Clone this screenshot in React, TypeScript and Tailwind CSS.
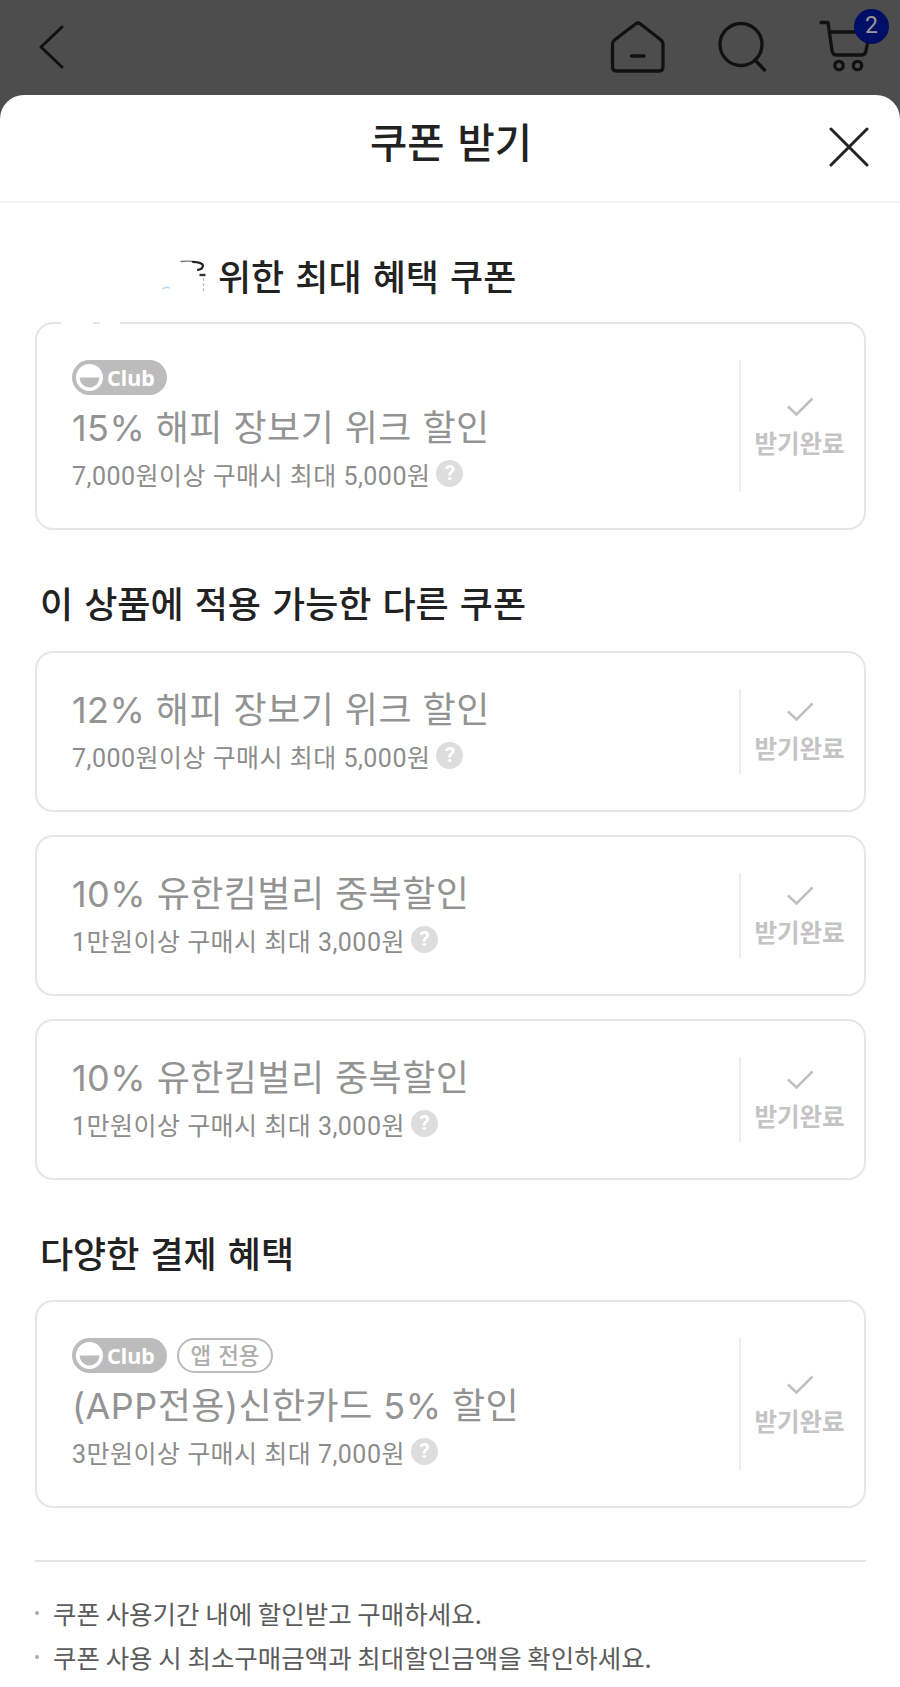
import { clsx } from "clsx";

interface Coupon {
  id: number;
  title: string;
  condition: string;
  club?: boolean;
  appOnly?: boolean;
}

const bestCoupons: Coupon[] = [
  { id: 1, title: "15% 해피 장보기 위크 할인", condition: "7,000원이상 구매시 최대 5,000원", club: true },
];

const otherCoupons: Coupon[] = [
  { id: 2, title: "12% 해피 장보기 위크 할인", condition: "7,000원이상 구매시 최대 5,000원" },
  { id: 3, title: "10% 유한킴벌리 중복할인", condition: "1만원이상 구매시 최대 3,000원" },
  { id: 4, title: "10% 유한킴벌리 중복할인", condition: "1만원이상 구매시 최대 3,000원" },
];

const paymentCoupons: Coupon[] = [
  { id: 5, title: "(APP전용)신한카드 5% 할인", condition: "3만원이상 구매시 최대 7,000원", club: true, appOnly: true },
];

const notes = [
  "쿠폰 사용기간 내에 할인받고 구매하세요.",
  "쿠폰 사용 시 최소구매금액과 최대할인금액을 확인하세요.",
];

const TopBar = () => (
  <header className="flex h-[95px] items-start justify-between bg-[#4d4d4d] text-[#111]">
    <svg className="ml-9 mt-5 h-14 w-8" viewBox="0 0 32 56" fill="none" stroke="currentColor" strokeWidth="3" strokeLinecap="round" strokeLinejoin="round">
      <path d="M26 7 5 27l21 20" />
    </svg>
    <div className="relative flex">
      <svg className="h-[95px] w-[340px]" viewBox="0 0 340 95" fill="none" stroke="currentColor" strokeWidth="3.300" strokeLinecap="round" strokeLinejoin="round">
        <path d="M75.500 24q2.500-2 5 0L101 40q2 1.500 2 4v23q0 4-4 4H56.500q-4 0-4-4V44q0-2.500 2-4zM71.500 56h12.500" />
        <circle cx="181" cy="44.500" r="21" />
        <path d="m195 60 9.500 10" />
        <path d="M261 22.500h7l4 28q.5 4.500 4.500 4.500h25q3.500 0 4.500-4l3.500-19H270" />
        <circle cx="279" cy="65.500" r="4.200" />
        <circle cx="297.500" cy="65.500" r="4.200" />
      </svg>
      <span className="absolute right-[11px] top-[9px] flex size-[35px] items-center justify-center rounded-full bg-[#000f66] font-['Roboto',sans-serif] text-[23px] text-[#9a9a9a]">
        2
      </span>
    </div>
  </header>
);

const ClubBadge = () => (
  <span className="flex h-[35px] w-[95px] items-center rounded-full bg-[#bcbcbc] pl-1">
    <svg className="size-[27px]" viewBox="0 0 27 27">
      <circle cx="13.500" cy="13.500" r="13.500" fill="#fff" />
      <path d="M3.500 13.500h20a10 10 0 0 1-20 0z" fill="#bcbcbc" />
    </svg>
    <span className="ml-1 font-['Noto_Sans',sans-serif] text-[21.500px] font-bold leading-none text-white">Club</span>
  </span>
);

const HelpIcon = () => (
  <span className="flex size-[27px] -translate-y-[3px] items-center justify-center rounded-full bg-[#ddd] font-['Roboto',sans-serif] text-[21px] font-bold tracking-normal text-white">
    ?
  </span>
);

const CouponCard = ({ coupon }: { coupon: Coupon }) => {
  const tall = coupon.club || coupon.appOnly;

  return (
    <div className={clsx("flex rounded-[18px] border-2 border-[#e6e6e6] py-9", tall ? "h-[208px]" : "h-[161px]")}>
      <div className={clsx("flex-1 pl-[35px]", !tall && "-mt-1")}>
        {tall && (
          <div className="mb-2 flex gap-2.5">
            {coupon.club && <ClubBadge />}
            {coupon.appOnly && (
              <span className="flex h-[35px] w-24 items-center justify-center rounded-full border-2 border-[#bcbcbc] pb-0.5 text-[22.500px] font-medium leading-none text-[#adadad] [word-spacing:2px]">
                앱 전용
              </span>
            )}
          </div>
        )}
        <p className="font-['Inter','Noto_Sans_CJK_KR',sans-serif] text-[36px] leading-[50px] tracking-[0.450px] text-[#939393]">{coupon.title}</p>
        <div className="flex items-center gap-1.5 font-['Roboto','Noto_Sans_CJK_KR',sans-serif] text-[25px] leading-[47px] tracking-[0.480px] text-[#8c8c8c]">
          {coupon.condition}
          <HelpIcon />
        </div>
      </div>
      <div className="flex w-[125px] flex-col items-center justify-center border-l-2 border-[#eee] pr-1.5 pt-0.5">
        <svg className="h-5 w-7" viewBox="0 0 28 20" fill="none" stroke="#c0c0c0" strokeWidth="2.500">
          <path d="M2 9.500 10.500 17.500 26.500 1.500" />
        </svg>
        <span className="mt-[11px] text-[24.500px] font-bold leading-[30px] text-[#c4c4c4]">받기완료</span>
      </div>
    </div>
  );
};

const App = () => (
  <div className="h-[1687px] overflow-hidden bg-[#4d4d4d] font-['Noto_Sans_CJK_KR',sans-serif]">
    <TopBar />
    <main className="h-[1592px] rounded-t-[24px] bg-white">
      <div className="relative flex h-[108px] items-center justify-center border-b-2 border-[#f5f5f5] pb-3.5 pl-0.5">
        <h1 className="text-[40.500px] font-medium text-[#222] [word-spacing:4px]">쿠폰 받기</h1>
        <svg className="absolute right-[31px] top-8 size-10" viewBox="0 0 40 40" stroke="#222" strokeWidth="3" strokeLinecap="round">
          <path d="m2 2 36 36M38 2 2 38" />
        </svg>
      </div>

      <div className="pl-[35px] pr-[34px]">
        <div className="relative">
          <h2 className="flex h-[119px] items-center pl-[183px] pt-6 text-[36px] font-medium text-[#222] [word-spacing:3px]">
            위한 최대 혜택 쿠폰
          </h2>
          {/* wiped-out user name */}
          <svg className="absolute left-[125px] top-[52px] h-10 w-[50px]" viewBox="0 0 50 40" fill="none" strokeLinecap="round">
            <path d="M21 6.500q8-1 15 .5" stroke="#777" strokeWidth="1.300" />
            <path d="M33 6.800q9 .5 10 3.500 0 4-5 4.500" stroke="#222" strokeWidth="2.200" />
            <path d="M39.500 20h6" stroke="#333" strokeWidth="2.400" strokeLinecap="butt" />
            <path d="M43.500 23.500v13" stroke="#bbb" strokeWidth="1.200" strokeDasharray="2 3" />
            <path d="M3 33.500q4-1.500 6-.8" stroke="#bcdcf5" strokeWidth="1.800" />
          </svg>
          <span className="absolute -bottom-[3px] left-[26px] h-1 w-8 bg-white" />
          <span className="absolute -bottom-[3px] left-[65px] h-1 w-5 bg-white" />
        </div>
        {bestCoupons.map((coupon) => (
          <CouponCard key={coupon.id} coupon={coupon} />
        ))}

        <h2 className="flex h-[121px] items-center pl-[5px] pt-[22px] text-[36px] font-medium text-[#222] [word-spacing:3px]">
          이 상품에 적용 가능한 다른 쿠폰
        </h2>
        <div className="flex flex-col gap-[23px]">
          {otherCoupons.map((coupon) => (
            <CouponCard key={coupon.id} coupon={coupon} />
          ))}
        </div>

        <h2 className="flex h-[120px] items-center pl-[5px] pt-[23px] text-[36px] font-medium text-[#222] [word-spacing:3px]">
          다양한 결제 혜택
        </h2>
        {paymentCoupons.map((coupon) => (
          <CouponCard key={coupon.id} coupon={coupon} />
        ))}

        <ul className="mt-[52px] border-t-2 border-[#e5e5e5] pt-[29px]">
          {notes.map((note) => (
            <li key={note} className="flex items-center gap-3.5 text-[25.500px] leading-[44px] text-[#5c5c5c]">
              <span className="size-1 rounded-full bg-[#aaa]" />
              {note}
            </li>
          ))}
        </ul>
      </div>
    </main>
  </div>
);

export default App;
